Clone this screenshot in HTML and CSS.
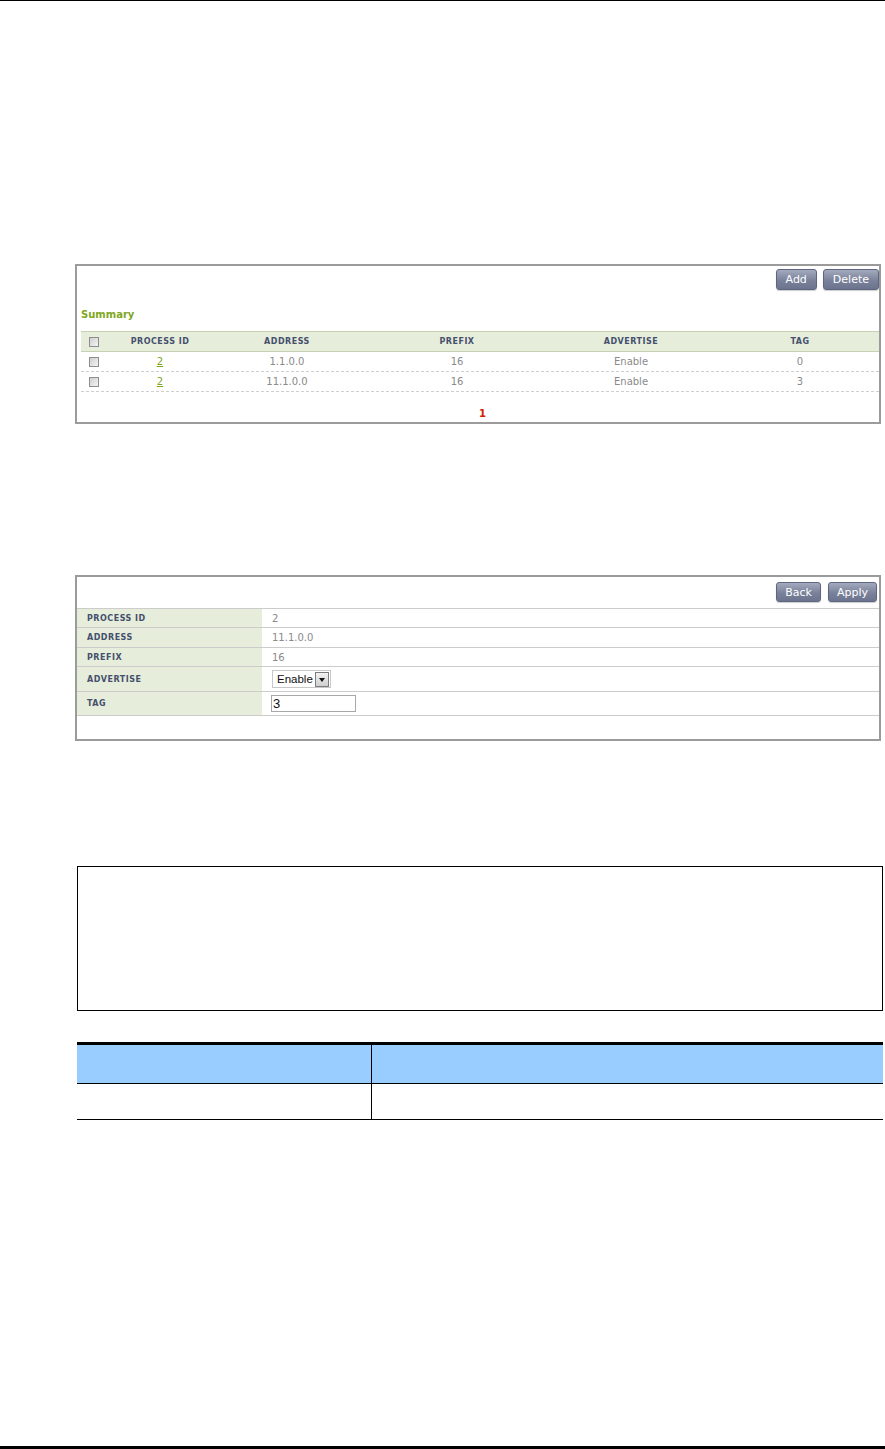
FILE: index.html
```html
<!DOCTYPE html>
<html lang="en">
  <head>
    <meta charset="UTF-8">
    <meta name="viewport" content="width=device-width,initial-scale=1.0">
    <title>Route Summary</title>
    <link rel="stylesheet" href="styles.css">
  </head>
  <body>
    <div class="page">
      <div class="rule rule-top"></div>
      <div class="content">

        <section class="panel panel-summary">
          <div class="toolbar">
            <button class="btn">Add</button>
            <button class="btn">Delete</button>
          </div>
          <h2 class="panel-title">Summary</h2>
          <div class="grid">
            <div class="grid-row grid-head">
              <span class="cell cell-check"><span class="check"></span></span>
              <span class="cell">PROCESS ID</span>
              <span class="cell">ADDRESS</span>
              <span class="cell">PREFIX</span>
              <span class="cell">ADVERTISE</span>
              <span class="cell cell-tag">TAG</span>
            </div>
            <div class="grid-row">
              <span class="cell cell-check"><span class="check"></span></span>
              <span class="cell"><a class="link" href="#">2</a></span>
              <span class="cell">1.1.0.0</span>
              <span class="cell">16</span>
              <span class="cell">Enable</span>
              <span class="cell cell-tag">0</span>
            </div>
            <div class="grid-row">
              <span class="cell cell-check"><span class="check"></span></span>
              <span class="cell"><a class="link" href="#">2</a></span>
              <span class="cell">11.1.0.0</span>
              <span class="cell">16</span>
              <span class="cell">Enable</span>
              <span class="cell cell-tag">3</span>
            </div>
          </div>
          <div class="pager">1</div>
        </section>

        <section class="panel panel-edit">
          <div class="toolbar toolbar-edit">
            <button class="btn btn-sm">Back</button>
            <button class="btn btn-sm">Apply</button>
          </div>
          <div class="form">
            <div class="form-row">
              <span class="form-label">PROCESS ID</span>
              <span class="form-value">2</span>
            </div>
            <div class="form-row">
              <span class="form-label">ADDRESS</span>
              <span class="form-value">11.1.0.0</span>
            </div>
            <div class="form-row">
              <span class="form-label">PREFIX</span>
              <span class="form-value">16</span>
            </div>
            <div class="form-row form-row-select">
              <span class="form-label">ADVERTISE</span>
              <span class="form-value">
                <span class="select"><span class="select-text">Enable</span><span class="select-arrow"></span></span>
              </span>
            </div>
            <div class="form-row form-row-input">
              <span class="form-label">TAG</span>
              <span class="form-value"><input class="text-input" type="text" value="3"></span>
            </div>
          </div>
        </section>

        <div class="note-box"></div>

        <div class="doc-table">
          <div class="doc-row doc-head"><div></div><div></div></div>
          <div class="doc-row doc-body"><div></div><div></div></div>
        </div>

      </div>
      <div class="rule rule-bottom"></div>
    </div>
  </body>
</html>
```

FILE: styles.css
```css
:root{--green:#7fa61d;--slate:#44506e;--muted:#8a8a8a;--tint:#e7eddb;--line:#cccccc}
*{box-sizing:border-box}
body{margin:0;background:#fff;font-family:"DejaVu Sans",Verdana,sans-serif;color:#333}
.page{display:flex;flex-direction:column;min-height:1449px}
.rule{background:#000}
.rule-top{height:1px}
.rule-bottom{height:3px;margin-top:auto}
.content{padding:263px 4px 0 75px}

/* ui panels */
.panel{border:2px solid #9b9b9b;background:#fff}
.panel-summary{height:160px;padding:3px 0 0 4px}
.panel-edit{height:166px;margin-top:151px;padding:5px 0 0}
.toolbar{display:flex;justify-content:flex-end;gap:6px}
.toolbar-edit{gap:7px;padding-right:2px}
.btn{height:21px;padding:0 9px;border:1px solid #5d6580;border-radius:3px;background:linear-gradient(#a3aabd,#7a829b 55%,#6b738e);color:#fff;font:11px "DejaVu Sans",Verdana,sans-serif;cursor:pointer;box-shadow:0 1px 1px rgba(0,0,0,.2)}
.btn-sm{height:20px;padding:0 8px}
.panel-title{margin:18px 0 0;font-size:10px;line-height:14px;font-weight:bold;color:var(--green)}

.grid{margin-top:9px}
.grid-row{display:grid;grid-template-columns:26px 106px 148px 192px 156px 1fr;height:20px;border-bottom:1px dashed #cfcfcf;font-size:10px;color:var(--muted)}
.grid-head{background:var(--tint);border-top:1px solid #c5d1b2;border-bottom:1px solid #c5d1b2;height:21px;font-size:8px;font-weight:bold;letter-spacing:.5px;color:var(--slate)}
.cell{display:flex;align-items:center;justify-content:center}
.cell-check{justify-content:flex-start;padding-left:8px}
.cell-tag{padding-left:12px}
.check{width:10px;height:10px;border:1px solid #8c8c8c;background:linear-gradient(135deg,#cfcfcf,#f4f4f4)}
.link{color:var(--green);text-decoration:underline}
.pager{margin-top:15px;padding-left:5px;text-align:center;font-size:10px;line-height:14px;font-weight:bold;color:#cc2200}

.form{margin-top:6px;border-top:1px solid var(--line)}
.form-row{display:grid;grid-template-columns:185px 1fr;height:19px;border-bottom:1px solid var(--line)}
.form-row:nth-child(2){height:20px}
.form-row-select{height:25px}
.form-row-input{height:24px}
.form-label{display:flex;align-items:center;padding-left:10px;background:var(--tint);font-size:8px;font-weight:bold;letter-spacing:.5px;color:var(--slate)}
.form-value{display:flex;align-items:center;padding-left:10px;font-size:10px;color:var(--muted)}
.select{display:flex;align-items:center;width:59px;height:18px;border:1px solid #c8c8c8;background:#fff}
.select-text{flex:1;padding-left:4px;font:11.5px "Liberation Sans",Arial,sans-serif;color:#111}
.select-arrow{position:relative;width:14px;height:15px;margin-right:1px;border:1px solid #7d7d7d;background:linear-gradient(#f2f2f2,#cfcfcf)}
.select-arrow::after{content:"";position:absolute;left:3px;top:5px;border-left:3.5px solid transparent;border-right:3.5px solid transparent;border-top:4px solid #111}
.text-input{width:85px;height:17px;margin-left:-1px;padding:0 1px;border:1px solid #a8a8a8;font:13px "Liberation Sans",Arial,sans-serif;color:#111;outline:none}

/* document frames */
.note-box{height:145px;margin:125px -2px 0 2px;border:1px solid #000}
.doc-table{margin:31px -2px 0 2px;border-top:3px solid #000;border-bottom:1px solid #000}
.doc-row{display:grid;grid-template-columns:294px 1fr}
.doc-row>div+div{border-left:1px solid #000}
.doc-head{height:39px;background:#99ccff;border-bottom:1px solid #000}
.doc-body{height:35px}
```
